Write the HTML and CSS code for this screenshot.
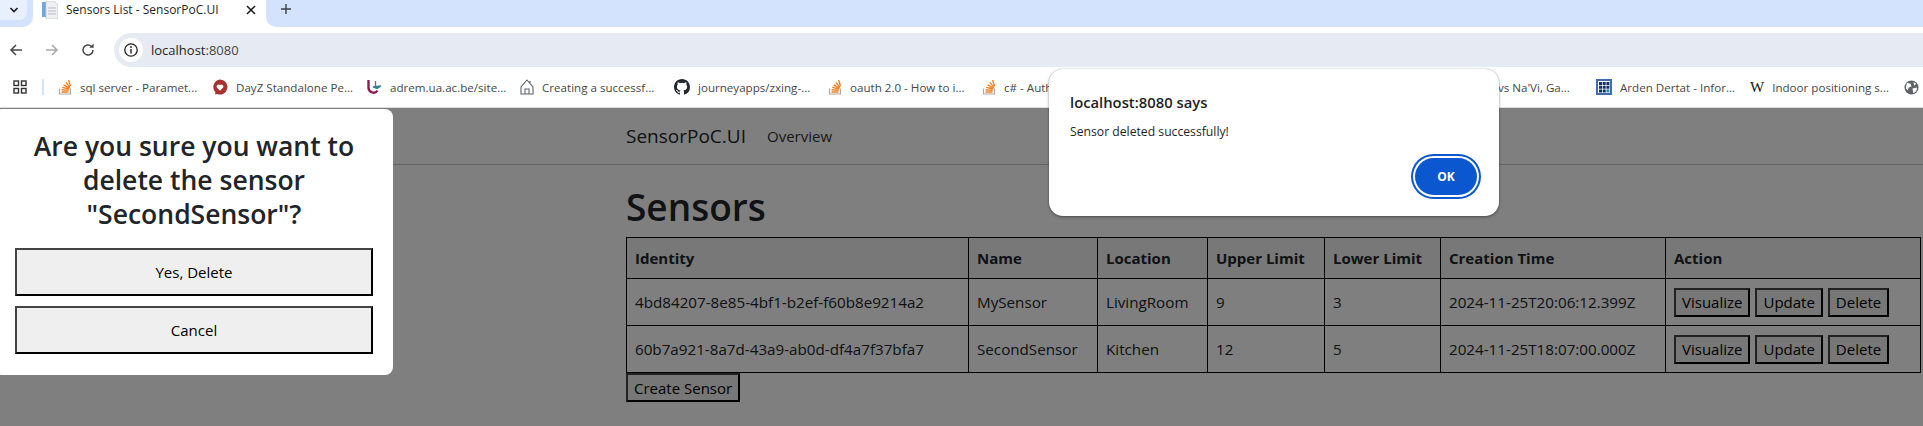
FILE: index.html
```html
<!DOCTYPE html>
<html>
  <head>
    <title>Sensors List - SensorPoC.UI</title>
    <link rel="stylesheet" href="styles.css">
  </head>
  <body>
    <div class="tabstrip">
      <div class="strip-left">
        <div class="tabsearch">
          <svg width="12" height="12" viewBox="0 0 12 12"><path d="M2.5 4 6 7.5 9.5 4" fill="none" stroke="#1f1f1f" stroke-width="1.7"/></svg>
        </div>
      </div>
      <div class="tab">
        <svg class="tab-icon" width="16" height="18" viewBox="0 0 16 18">
          <rect x="0" y="1" width="4" height="15" fill="#6fa8dc"/>
          <path d="M4 0h8l4 4v14H4z" fill="#eef0f3" stroke="#c4c8cf" stroke-width=".8"/>
          <path d="M6 7h8M6 10h8M6 13h8" stroke="#b5bac2" stroke-width="1"/>
        </svg>
        <span class="tab-title">Sensors List - SensorPoC.UI</span>
        <svg class="tab-close" width="10" height="10" viewBox="0 0 10 10"><path d="M1 1l8 8M9 1L1 9" stroke="#1f1f1f" stroke-width="1.6"/></svg>
      </div>
      <div class="strip-right">
        <svg class="newtab" width="12" height="12" viewBox="0 0 12 12"><path d="M6 1v10M1 6h10" stroke="#3c4043" stroke-width="1.4"/></svg>
      </div>
    </div>

    <div class="toolbar">
      <svg class="nav-btn" width="16" height="16" viewBox="0 0 16 16"><path d="M14 8H3M8 3 3 8l5 5" fill="none" stroke="#474747" stroke-width="1.5"/></svg>
      <svg class="nav-btn" width="16" height="16" viewBox="0 0 16 16"><path d="M2 8h11M8 3l5 5-5 5" fill="none" stroke="#a8a8a8" stroke-width="1.5"/></svg>
      <svg class="nav-btn" width="16" height="16" viewBox="0 0 16 16"><path d="M13 8a5 5 0 1 1-1.6-3.7" fill="none" stroke="#474747" stroke-width="1.5"/><path d="M13.6 1.5v4.2H9.4z" fill="#474747"/></svg>
      <div class="omnibox">
        <div class="site-info">
          <svg width="16" height="16" viewBox="0 0 16 16"><circle cx="8" cy="8" r="6.2" fill="none" stroke="#1f1f1f" stroke-width="1.3"/><path d="M8 7v4.5" stroke="#1f1f1f" stroke-width="1.4"/><circle cx="8" cy="5" r=".9" fill="#1f1f1f"/></svg>
        </div>
        <span class="url">localhost<span class="url-port">:8080</span></span>
      </div>
    </div>

    <div class="bookmarks">
      <svg class="apps" width="14" height="14" viewBox="0 0 14 14" fill="none" stroke="#333" stroke-width="1.4"><rect x="1" y="1" width="4.5" height="4.5"/><rect x="8.5" y="1" width="4.5" height="4.5"/><rect x="1" y="8.5" width="4.5" height="4.5"/><rect x="8.5" y="8.5" width="4.5" height="4.5"/></svg>
      <div class="bm-sep"></div>
      <div class="bm">
        <svg width="14" height="16" viewBox="0 0 14 16"><path d="M1.5 9.5V15h11V9.5" fill="none" stroke="#b0a89e" stroke-width="1.2"/><path d="M3.5 13h7M3.6 10.8l7 .6M4.2 8.4l6.9 1.6M5.6 5.9l6 3.4M7.8 3.4l4.2 5M10.6 1l1.9 6.2" fill="none" stroke="#f48024" stroke-width="1.4"/></svg>
        <span>sql server - Paramet...</span>
      </div>
      <div class="bm">
        <svg width="16" height="16" viewBox="0 0 16 16"><path d="M8 .5a7.5 7.5 0 1 1-3 14.4L3 15.5l.4-2.4A7.5 7.5 0 0 1 8 .5z" fill="#a8322f"/><path d="M8 11.8 4.8 8.4A2 2 0 0 1 8 6.1a2 2 0 0 1 3.2 2.3z" fill="#fff"/></svg>
        <span>DayZ Standalone Pe...</span>
      </div>
      <div class="bm">
        <svg width="16" height="16" viewBox="0 0 16 16"><path d="M2.5 1v8a5 5 0 0 0 9 2.6" fill="none" stroke="#8e1f55" stroke-width="2.4"/><path d="M7 8l8-1-4 2.6zM9.5 2v5" stroke="#3b7f8f" stroke-width="1.3" fill="#3b7f8f"/></svg>
        <span>adrem.ua.ac.be/site...</span>
      </div>
      <div class="bm">
        <svg width="14" height="16" viewBox="0 0 14 16" fill="none" stroke="#5f6368" stroke-width="1.1"><path d="M7 1 1 8v7h12V8zM5 15v-5h4v5M10 2v3"/></svg>
        <span>Creating a successf...</span>
      </div>
      <div class="bm">
        <svg width="16" height="16" viewBox="0 0 16 16"><path fill="#24292f" d="M8 0C3.58 0 0 3.58 0 8c0 3.54 2.29 6.53 5.47 7.59.4.07.55-.17.55-.38 0-.19-.01-.82-.01-1.49-2.01.37-2.53-.49-2.69-.94-.09-.23-.48-.94-.82-1.13-.28-.15-.68-.52-.01-.53.63-.01 1.08.58 1.23.82.72 1.21 1.87.87 2.33.66.07-.52.28-.87.51-1.07-1.78-.2-3.64-.89-3.64-3.95 0-.87.31-1.59.82-2.15-.08-.2-.36-1.02.08-2.12 0 0 .67-.21 2.2.82a7.4 7.4 0 0 1 4 0c1.53-1.04 2.2-.82 2.2-.82.44 1.1.16 1.92.08 2.12.51.56.82 1.27.82 2.15 0 3.07-1.87 3.75-3.65 3.95.29.25.54.73.54 1.48 0 1.07-.01 1.93-.01 2.2 0 .21.15.46.55.38A8 8 0 0 0 16 8c0-4.42-3.58-8-8-8z"/></svg>
        <span>journeyapps/zxing-...</span>
      </div>
      <div class="bm">
        <svg width="14" height="16" viewBox="0 0 14 16"><path d="M1.5 9.5V15h11V9.5" fill="none" stroke="#b0a89e" stroke-width="1.2"/><path d="M3.5 13h7M3.6 10.8l7 .6M4.2 8.4l6.9 1.6M5.6 5.9l6 3.4M7.8 3.4l4.2 5M10.6 1l1.9 6.2" fill="none" stroke="#f48024" stroke-width="1.4"/></svg>
        <span>oauth 2.0 - How to i...</span>
      </div>
      <div class="bm">
        <svg width="14" height="16" viewBox="0 0 14 16"><path d="M1.5 9.5V15h11V9.5" fill="none" stroke="#b0a89e" stroke-width="1.2"/><path d="M3.5 13h7M3.6 10.8l7 .6M4.2 8.4l6.9 1.6M5.6 5.9l6 3.4M7.8 3.4l4.2 5M10.6 1l1.9 6.2" fill="none" stroke="#f48024" stroke-width="1.4"/></svg>
        <span>c# - Authentication</span>
      </div>
      <div class="bm-hidden"></div>
      <span class="bm-tail">vs Na'Vi, Ga...</span>
      <div class="bm">
        <svg width="16" height="16" viewBox="0 0 16 16"><rect width="16" height="16" fill="#3f6db3"/><rect x="2" y="2" width="12" height="12" fill="#fff"/><path d="M3 3h3v3H3zM6.7 3h3v3h-3zM10.4 3h3v3h-3zM3 6.7h3v3H3zM6.7 6.7h3v3h-3zM10.4 6.7h3v3h-3zM3 10.4h3v3H3zM6.7 10.4h3v3h-3z" fill="#14305f"/><path d="M10.4 10.4h3v3h-3z" fill="#1c93a0"/></svg>
        <span>Arden Dertat - Infor...</span>
      </div>
      <div class="bm">
        <span class="wiki">W</span>
        <span>Indoor positioning s...</span>
      </div>
      <svg width="15" height="15" viewBox="0 0 16 16"><circle cx="8" cy="8" r="7.5" fill="#5f6368"/><path d="M3 3l4 1 1 3-3 1-1 3-2-2zM10 2l3 2-2 2zM9 9l5-1-1 4-3 2z" fill="#fff"/></svg>
    </div>

    <div class="page">
      <nav class="navbar">
        <span class="brand">SensorPoC.UI</span>
        <a class="nav-link">Overview</a>
      </nav>
      <main class="content">
        <h1>Sensors</h1>
        <table class="sensors">
          <colgroup>
            <col class="c-id"><col class="c-name"><col class="c-loc"><col class="c-up"><col class="c-low"><col class="c-time"><col class="c-act">
          </colgroup>
          <thead>
            <tr>
              <th>Identity</th><th>Name</th><th>Location</th><th>Upper Limit</th><th>Lower Limit</th><th>Creation Time</th><th>Action</th>
            </tr>
          </thead>
          <tbody>
            <tr>
              <td>4bd84207-8e85-4bf1-b2ef-f60b8e9214a2</td><td>MySensor</td><td>LivingRoom</td><td>9</td><td>3</td><td>2024-11-25T20:06:12.399Z</td>
              <td class="actions"><button>Visualize</button><button>Update</button><button>Delete</button></td>
            </tr>
            <tr>
              <td>60b7a921-8a7d-43a9-ab0d-df4a7f37bfa7</td><td>SecondSensor</td><td>Kitchen</td><td>12</td><td>5</td><td>2024-11-25T18:07:00.000Z</td>
              <td class="actions"><button>Visualize</button><button>Update</button><button>Delete</button></td>
            </tr>
          </tbody>
        </table>
        <button class="create">Create Sensor</button>
      </main>
      <div class="backdrop"></div>
      <div class="confirm">
        <h3>Are you sure you want to delete the sensor "SecondSensor"?</h3>
        <button>Yes, Delete</button>
        <button>Cancel</button>
      </div>
    </div>

    <div class="alert">
      <div class="alert-title">localhost:8080 says</div>
      <div class="alert-msg">Sensor deleted successfully!</div>
      <div class="alert-actions"><button class="alert-ok">OK</button></div>
    </div>
  </body>
</html>
```

FILE: styles.css
```css
html, body {
    margin: 0;
    padding: 0;
    height: 100%;
    overflow: hidden;
}
body {
    width: 1923px;
    height: 426px;
    position: relative;
    font-family: "Open Sans", "Noto Sans", sans-serif;
    color: #212529;
    background: #fff;
}

/* browser chrome */
.tabstrip {
    height: 27px;
    background: #fff;
    display: flex;
}
.strip-left {
    width: 33px;
    flex: none;
    background: #d3e3fd;
    border-bottom-right-radius: 10px;
}
.strip-right {
    flex: 1;
    background: #d3e3fd;
    border-bottom-left-radius: 10px;
}
.tabsearch {
    width: 27px;
    height: 20px;
    background: #e8f0fd;
    border-radius: 0 0 8px 0;
    display: flex;
    align-items: center;
    justify-content: center;
}
.tab {
    width: 233px;
    height: 27px;
    background: #fff;
    display: flex;
    align-items: center;
    flex: none;
}
.tab-icon { margin-left: 9px; margin-top: -8px; flex: none; }
.tab-title {
    margin-left: 8px;
    margin-top: -8px;
    font-size: 12px;
    color: #1f1f1f;
    white-space: nowrap;
    width: 180px;
}
.tab-close { margin-top: -8px; flex: none; }
.newtab { margin: 3px 0 0 14px; display: block; }

.toolbar {
    height: 40px;
    padding-top: 6px;
    box-sizing: border-box;
    background: #fff;
    display: flex;
    align-items: center;
}
.toolbar .nav-btn { margin-left: 8px; width: 16px; flex: none; margin-right: 12px; }
.omnibox {
    flex: 1;
    height: 34px;
    margin-left: 6px;
    background: #e6eaf3;
    border-radius: 17px 0 0 17px;
    display: flex;
    align-items: center;
}
.site-info {
    width: 24px;
    height: 24px;
    margin-left: 5px;
    border-radius: 50%;
    background: #fff;
    display: flex;
    align-items: center;
    justify-content: center;
}
.url { margin-left: 8px; font-size: 13px; color: #1f1f1f; }
.url-port { color: #474747; }

.bookmarks {
    height: 40px;
    background: #fff;
    display: flex;
    align-items: center;
    font-size: 11.6px;
    color: #474747;
    white-space: nowrap;
}
.apps { margin-left: 13px; flex: none; }
.bm-sep { width: 2px; height: 16px; background: #d3e3fd; margin: 0 14px 0 15px; flex: none; }
.bm {
    width: 154px;
    flex: none;
    display: flex;
    align-items: center;
    gap: 8px;
    overflow: hidden;
}
.bm svg { flex: none; }
.bm-hidden { width: 308px; flex: none; }
.bm-tail { margin-left: 54px; width: 98px; flex: none; }
.wiki { font-family: "Liberation Serif", serif; font-size: 15px; color: #111; }

/* the page itself */
.page {
    position: relative;
    height: 319px;
    overflow: hidden;
    background: #fff;
    border-top: 1px solid #ddd;
    box-sizing: border-box;
}
.navbar {
    height: 57px;
    box-sizing: border-box;
    border-bottom: 1px solid #c8c8c8;
    padding-left: 626px;
    display: flex;
    align-items: center;
}
.brand { font-size: 19px; margin-right: 21px; }
.nav-link { font-size: 15px; color: #333; }
.content { padding-left: 626px; }
h1 {
    margin: 19px 0 7px;
    font-size: 37px;
    font-weight: 600;
    line-height: 46px;
}
.sensors {
    border-collapse: collapse;
    table-layout: fixed;
    width: 1295px;
    font-size: 15.2px;
}
.c-id { width: 342px; }
.c-name { width: 129px; }
.c-loc { width: 110px; }
.c-up { width: 117px; }
.c-low { width: 116px; }
.c-time { width: 225px; }
.sensors th, .sensors td {
    border: 1px solid #000;
    padding: 0 8px;
    text-align: left;
    white-space: nowrap;
}
.sensors th { height: 40px; background: #f0f0f0; font-size: 15px; font-weight: 700; }
.sensors td { height: 46px; }
button {
    font-family: inherit;
    font-size: 15px;
    color: #000;
    background: #efefef;
    border: 2px solid;
    border-color: #444 #000 #000 #444;
    padding: 1px 6px;
}
.actions button { margin-right: 5px; height: 29px; }
.create { height: 29px; display: block; }

/* overlays */
.backdrop {
    position: absolute;
    inset: 0;
    background: rgba(0, 0, 0, .5);
}
.confirm {
    position: absolute;
    left: -6px;
    top: 1px;
    width: 399px;
    height: 266px;
    box-sizing: border-box;
    padding: 20px 20px 0 21px;
    background: #fff;
    border-radius: 8px;
}
.confirm h3 {
    margin: 0 0 17px;
    text-align: center;
    font-size: 26.5px;
    font-weight: 600;
    line-height: 34px;
}
.confirm button {
    display: block;
    width: 358px;
    height: 48px;
    margin-bottom: 10px;
}
.alert {
    position: absolute;
    left: 1049px;
    top: 69px;
    width: 450px;
    height: 147px;
    box-sizing: border-box;
    padding: 21px 20px 0 21px;
    background: #fff;
    border-radius: 14px;
    box-shadow: 0 1px 3px rgba(0, 0, 0, .4), 0 0 1px rgba(0, 0, 0, .3);
}
.alert-title { font-size: 14.8px; font-weight: 600; color: #1f1f1f; line-height: 24px; }
.alert-msg { margin-top: 9px; font-size: 12.2px; color: #1f1f1f; line-height: 18px; }
.alert-actions { display: flex; justify-content: flex-end; margin-top: 17px; }
.alert-ok {
    width: 62px;
    height: 37px;
    margin-right: 2px;
    border: 0;
    border-radius: 19px;
    background: #0b57d0;
    color: #fff;
    font-size: 12px;
    font-weight: 700;
    box-shadow: 0 0 0 2px #fff, 0 0 0 4px #0b57d0;
}
```
